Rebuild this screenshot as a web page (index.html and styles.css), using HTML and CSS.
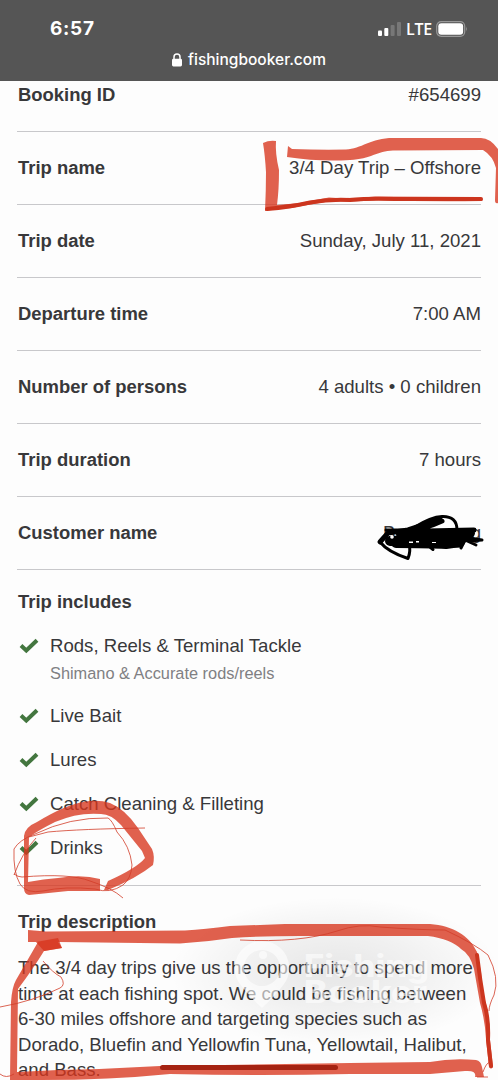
FILE: index.html
```
<!DOCTYPE html>
<html lang="en">
<head>
<meta charset="utf-8">
<title>Booking details</title>
<link rel="stylesheet" href="styles.css">
</head>
<body>
<div class="phone">
  <header class="browser-bar">
    <div class="status">
      <span class="clock">6:57</span>
      <div class="indicators">
        <svg class="signal" width="24" height="16" viewBox="0 0 24 16"><g fill="#fff"><rect x="0" y="9.5" width="4" height="5.5" rx="1"/><rect x="6.3" y="7" width="4" height="8" rx="1"/></g><g fill="#777"><rect x="12.6" y="4" width="4" height="11" rx="1"/><rect x="19" y="1" width="4" height="14" rx="1"/></g></svg>
        <span class="network">LTE</span>
        <svg class="battery" width="32" height="16" viewBox="0 0 32 16"><rect x=".7" y=".7" width="28" height="14.6" rx="4.5" fill="none" stroke="#999" stroke-width="1.2"/><rect x="2.3" y="2.3" width="24.8" height="11.4" rx="3" fill="#fff"/><path d="M30 5.5Q31.6 8 30 10.5Z" fill="#999"/></svg>
      </div>
    </div>
    <div class="address">
      <svg width="10" height="14" viewBox="0 0 10 14"><rect x="0" y="5.8" width="10" height="7.7" rx="1.4" fill="#fff"/><path d="M2 6.5V4a3 3 0 0 1 6 0V6.5" fill="none" stroke="#fff" stroke-width="1.5"/></svg>
      <span>fishingbooker.com</span>
    </div>
  </header>
  <main class="content">
    <dl class="details">
      <div class="row"><dt>Booking ID</dt><dd>#654699</dd></div>
      <div class="row"><dt>Trip name</dt><dd>3/4 Day Trip – Offshore</dd></div>
      <div class="row"><dt>Trip date</dt><dd>Sunday, July 11, 2021</dd></div>
      <div class="row"><dt>Departure time</dt><dd>7:00 AM</dd></div>
      <div class="row"><dt>Number of persons</dt><dd>4 adults • 0 children</dd></div>
      <div class="row"><dt>Trip duration</dt><dd>7 hours</dd></div>
      <div class="row"><dt>Customer name</dt><dd class="redacted"><span>B</span><span>g</span></dd></div>
    </dl>
    <section class="includes">
      <h2>Trip includes</h2>
      <ul>
        <li><svg class="check" viewBox="0 0 20 16"><path d="M2 7.5 7.3 12.5 18 2.2"/></svg><div>Rods, Reels &amp; Terminal Tackle<p class="note">Shimano &amp; Accurate rods/reels</p></div></li>
        <li><svg class="check" viewBox="0 0 20 16"><path d="M2 7.5 7.3 12.5 18 2.2"/></svg><div>Live Bait</div></li>
        <li><svg class="check" viewBox="0 0 20 16"><path d="M2 7.5 7.3 12.5 18 2.2"/></svg><div>Lures</div></li>
        <li><svg class="check" viewBox="0 0 20 16"><path d="M2 7.5 7.3 12.5 18 2.2"/></svg><div>Catch Cleaning &amp; Filleting</div></li>
        <li><svg class="check" viewBox="0 0 20 16"><path d="M2 7.5 7.3 12.5 18 2.2"/></svg><div>Drinks</div></li>
      </ul>
    </section>
    <section class="description">
      <h2>Trip description</h2>
      <p>The 3/4 day trips give us the opportunity to spend more<br>time at each fishing spot. We could be fishing between<br>6-30 miles offshore and targeting species such as<br>Dorado, Bluefin and Yellowfin Tuna, Yellowtail, Halibut,<br>and Bass.</p>
    </section>
  </main>

  <svg class="overlay" width="498" height="1080" viewBox="0 0 498 1080">
    <defs>
      <radialGradient id="shade"><stop offset="0" stop-color="#000" stop-opacity=".09"/><stop offset=".5" stop-color="#000" stop-opacity=".05"/><stop offset="1" stop-color="#000" stop-opacity="0"/></radialGradient>
    </defs>
    <!-- watermark -->
    <ellipse cx="335" cy="972" rx="165" ry="75" fill="url(#shade)"/>
    <g fill="#fff" fill-opacity=".6">
      <path fill-rule="evenodd" d="M262 941a27 27 0 0 1 22 43q-8 11-22 24q-14-13-22-24a27 27 0 0 1 22-43ZM262 950a18 18 0 1 0 .1 0Z"/>
      <circle cx="263" cy="955" r="4"/>
      <text class="mark" x="304" y="977" textLength="125" lengthAdjust="spacingAndGlyphs">Fishing</text>
      <text class="mark" x="304" y="1003" textLength="123" lengthAdjust="spacingAndGlyphs">Booker</text>
    </g>
    <!-- marker around the trip name -->
    <g class="marker">
      <path d="M263 143Q269 140 276 141Q275 153 279 170Q279 190 277 205L300 203Q318 199 329 197.500Q350 199 375 196.500L480 197Q484 199 482 201Q430 202 376 200Q350 202 329 201.500Q305 205 292 208Q278 208 265 211Q266 190 266 172Q265 155 263 143Z"/>
      <path d="M288 146L292 149Q320 150 346 149.500C361 149 371 138 393 138L481 138Q490 138 498 149V203Q495 204 495 200L496 168Q493 156 483 150L393 150.500C377 151 371 159 350 160Q320 162 287 157Z"/>
    </g>
    <path class="ink-edge" d="M267 209Q290 207 310 202.500Q329 199 350 200Q370 198 395 199L481 199"/>
    <!-- marker around drinks -->
    <g class="marker">
      <path d="M24 888V836Q25 827 37 822Q65 805 83 802Q98 799 110 803Q125 809 138 828L152 849Q155 856 153 865Q137 878 108 890L104 890L108 881Q137 868 145 858L142 851L121 825Q111 814 101 814Q78 812 55 822Q39 830 29 837L28 882Q44 879 58 878Q82 874 100 879V891H68L29 895Q24 894 24 888Z"/>
    </g>
    <g class="thin">
      <path d="M29 837L48 832Q80 829 145 828"/>
      <path d="M14 849Q19 840 35 834Q70 817 108 818Q112 820 117 832Q130 846 132 865Q131 879 123 885Q110 894 95 889Q65 886 43 891Q26 894 20 884Q13 872 14 849Z"/>
      <path d="M14 874Q18 877 22 877Q70 873 90 881Q112 888 123 898M14 875Q22 853 36 838"/>
    </g>
    <!-- marker around the description -->
    <g class="marker">
      <path d="M28 930L46 931.500L185 930.500Q205 929 230 926L285 924H430C453 926 469 935 477 952L481 972Q482 990 486 1004Q490 1020 490 1040L493 1067Q491 1070 489 1067L486 1039Q485 1020 480 1003L474 969Q470 954 461 949Q451 939 428 936H300Q260 936 232 938Q206 942 180 943.500L58 942L62 948L44 951Q33 969 18 989L17 1072L58 1070Q110 1069 160 1066L350 1063L430 1062Q452 1058 476 1060Q481 1061 482 1067L484 1077L475 1077Q477 1070 465 1071L430 1074H350Q260 1076 170 1074Q110 1080 40 1080H10L11 1002Q12 987 16 980L38 942L28 942Z"/>
      <path d="M36 942L58 938L62 948L44 951Z"/>
    </g>
    <path class="ink-edge" d="M477 955Q480 980 484 1003Q489 1018 488 1040L491 1066"/>
    <!-- home indicator -->
    <rect x="160" y="1065" width="178" height="5" rx="2.500" fill="#a52312"/>
    <g class="thin">
      <path d="M43 961Q53 973 61 977Q66 985 60 988Q34 1001 0 1007"/>
      <path d="M240 940Q300 943 337 931Q360 923 380 927Q420 930 445 930Q475 944 488 955Q500 978 494 995Q489 1005 489 1011M490 1062Q486 1063 483 1072M477 1077H488"/>
      <path d="M0 1074Q6 1079 14 1074"/>
    </g>
    <!-- blacked-out customer name -->
    <g class="scribble">
      <path stroke-width="10" d="M390 541Q410 539 434 542T462 539M401 534Q425 533 446 536T470 533M396 543Q430 543 446 544L460 542"/>
      <path stroke-width="5" d="M380 542L388 533L408 530L440 519.500M404 532Q425 529 442 521M426 531L474 530"/>
      <path stroke-width="3" d="M380 542Q388 552 408 558.500Q411 551 409 543M415 527Q431 517 442 516.500Q457 516 457 530M461 548L465 540L476 545M430 547L433 549.500M440 546L459 546M462 537L482 540L468 541M386 530H404"/>
    </g>
    <g fill="#fff"><circle cx="392" cy="537" r="1.800"/><rect x="409" y="541.500" width="4" height="1.500"/><rect x="416" y="541" width="3" height="1.500"/><rect x="432" y="542" width="4" height="1"/></g>
  </svg>
</div>
</body>
</html>
```
FILE: styles.css
```
* { box-sizing: border-box; }
body { margin: 0; background: #fdfdfd; color: #38383a; font-family: "Liberation Sans", Arial, sans-serif; font-size: 18.600px; }
dl, dd, ul, p, h2 { margin: 0; padding: 0; }
ul { list-style: none; }
.phone { position: relative; width: 498px; height: 1080px; overflow: hidden; }
.browser-bar { height: 81px; padding-top: 16px; background: #555; color: #fff; }
.status { display: flex; justify-content: space-between; align-items: center; height: 25px; padding: 0 30px 0 50px; }
.clock { font: 700 19px/25px Inter, sans-serif; letter-spacing: .7px; }
.indicators { display: flex; align-items: center; }
.signal { margin-right: 4px; }
.network { width: 30px; font: 600 16px/24px "Open Sans", sans-serif; letter-spacing: -.3px; }
.address { display: flex; justify-content: center; align-items: center; gap: 6px; height: 38px; font: 500 15.500px/20px Inter, sans-serif; }
.content { padding: 0 17px; }
.details { margin-top: -22px; }
.row { display: flex; justify-content: space-between; align-items: center; height: 73px; border-bottom: 1px solid #c8c8cb; line-height: 22px; }
.row dt, h2 { padding-left: 1px; font-size: 18.450px; font-weight: 700; }
.redacted { display: flex; justify-content: space-between; width: 98px; }
.includes { height: 316px; padding-top: 21px; border-bottom: 1px solid #c8c8cb; }
h2 { line-height: 22px; }
.includes ul { display: grid; gap: 20px; margin-top: 21px; }
.includes li { display: flex; gap: 11px; padding-left: 2px; line-height: 24px; }
.check { width: 20px; height: 16px; margin-top: 4px; fill: none; stroke: #43763f; stroke-width: 4; }
.note { padding-top: 4px; color: #808083; font-size: 16.350px; line-height: 22px; }
.description { padding-top: 25px; }
.description p { margin-top: 22px; padding-left: 1px; line-height: 25.600px; white-space: nowrap; }
.overlay { position: absolute; left: 0; top: 0; pointer-events: none; }
.mark { font: 800 31px Inter, sans-serif; }
.marker { fill: #d7341c; fill-opacity: .78; }
.ink-edge { fill: none; stroke: #cc351e; stroke-width: 4; stroke-linecap: round; }
.thin { fill: none; stroke: #d23c28; stroke-width: .8; }
.scribble { fill: none; stroke: #000; stroke-linecap: round; stroke-linejoin: round; }
```
